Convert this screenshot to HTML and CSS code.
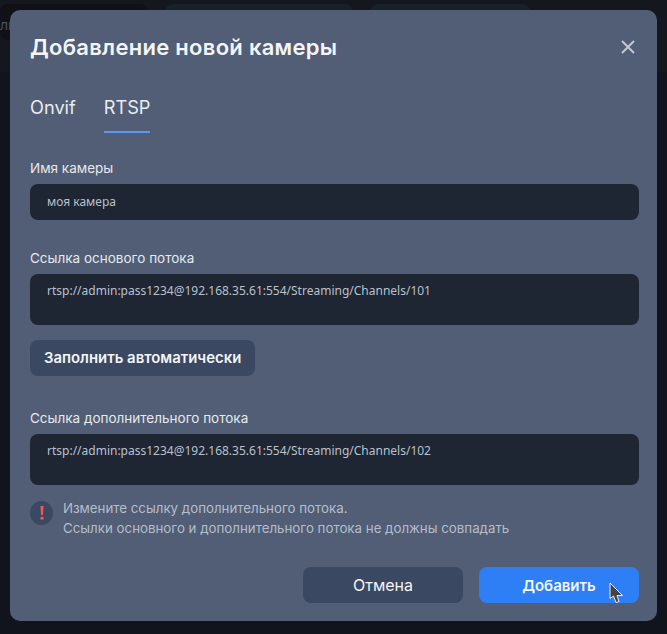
FILE: index.html
```html
<!DOCTYPE html>
<html lang="ru">
  <head>
    <meta charset="UTF-8" />
    <title>Добавление новой камеры</title>
    <link rel="stylesheet" href="styles.css">
  </head>
  <body>
    <div class="page-behind">
      <div class="behind-tabs">
        <div class="behind-tab behind-tab-first">ли</div>
        <div class="behind-tab behind-tab-second"></div>
        <div class="behind-tab behind-tab-third"></div>
      </div>
    </div>

    <div class="modal">
      <div class="modal-header">
        <h1 class="modal-title">Добавление новой камеры</h1>
        <svg class="modal-close" width="16" height="16" viewBox="0 0 16 16" fill="none" stroke="currentColor" stroke-width="2">
          <path d="M2 2l12 12M14 2L2 14"/>
        </svg>
      </div>

      <div class="tabs">
        <div class="tab">Onvif</div>
        <div class="tab tab-active">RTSP</div>
      </div>

      <div class="field field-name">
        <div class="field-label">Имя камеры</div>
        <div class="input">моя камера</div>
      </div>

      <div class="field field-main">
        <div class="field-label">Ссылка основого потока</div>
        <div class="input input-area">rtsp://admin:pass1234@192.168.35.61:554/Streaming/Channels/101</div>
      </div>

      <button class="btn btn-fill">Заполнить автоматически</button>

      <div class="field field-extra">
        <div class="field-label">Ссылка дополнительного потока</div>
        <div class="input input-area">rtsp://admin:pass1234@192.168.35.61:554/Streaming/Channels/102</div>
      </div>

      <div class="warning">
        <div class="warning-icon">
          <svg width="4" height="14" viewBox="0 0 4 14" fill="currentColor">
            <path d="M0.4 0h3.2L2.9 9H1.1z"/>
            <circle cx="2" cy="12.2" r="1.6"/>
          </svg>
        </div>
        <div class="warning-text">
          <div>Измените ссылку дополнительного потока.</div>
          <div>Ссылки основного и дополнительного потока не должны совпадать</div>
        </div>
      </div>

      <div class="modal-footer">
        <button class="btn btn-cancel">Отмена</button>
        <button class="btn btn-submit">Добавить</button>
      </div>

      <svg class="cursor" width="15" height="23" viewBox="0 0 15 23">
        <path d="M1 1v15.5l3.5-2.5 2.5 6.5 3-1-2-6h5.5z" fill="#444" stroke="#eee" stroke-width="1"/>
      </svg>
    </div>
  </body>
</html>
```

FILE: styles.css
```css
:root {
  --modal: #515e75;
  --field: #1e2533;
  --btn: #3b4861;
  --primary: #2e7ff6;
  --text: #f3f5f8;
  --muted: #b5bdca;
}

html,
body {
  margin: 0;
  padding: 0;
  height: 100%;
  background-color: #11141c;
  font-family: Inter, "Noto Sans", sans-serif;
  color: var(--text);
  overflow: hidden;
}

.page-behind {
  height: 72px;
  background-color: #14171e;
}

.behind-tabs {
  display: flex;
  gap: 17px;
  padding-top: 4px;
}

.behind-tab {
  height: 36px;
  border-radius: 8px;
  background-color: #182029;
  font-size: 14px;
  color: #4a505c;
  line-height: 42px;
}

.behind-tab-first {
  width: 148px;
  background-color: #0f1116;
}

.behind-tab-second {
  width: 188px;
}

.behind-tab-third {
  width: 160px;
}

.modal {
  position: absolute;
  top: 10px;
  left: 10px;
  width: 609px;
  height: 571px;
  padding: 20px 18px 20px 20px;
  border-radius: 10px;
  background-color: var(--modal);
}

.modal-header {
  display: flex;
  justify-content: space-between;
  align-items: center;
  height: 34px;
}

.modal-title {
  margin: 0;
  font-size: 22px;
  font-weight: 600;
  letter-spacing: 0.28px;
}

.modal-close {
  color: #c3c9d4;
  margin-right: 3px;
}

.tabs {
  display: flex;
  gap: 28px;
  margin-top: 21px;
}

.tab {
  height: 48px;
  font-size: 18.2px;
  line-height: 44px;
  color: #e9ecf1;
}

.tab-active {
  border-bottom: 2px solid #5c97f5;
  box-sizing: border-box;
}

.field-name {
  margin-top: 25px;
}

.field-main {
  margin-top: 28px;
}

.field-extra {
  margin-top: 32px;
}

.field-label {
  font-size: 13.5px;
  line-height: 20px;
  color: #e6e9ee;
  margin-bottom: 6px;
}

.input {
  box-sizing: border-box;
  height: 36px;
  padding: 0 17px;
  border-radius: 8px;
  background-color: var(--field);
  font-family: "Noto Sans", sans-serif;
  font-size: 12px;
  line-height: 36px;
  color: #b9c1cd;
}

.input-area {
  height: 51px;
  line-height: 17px;
  padding-top: 8px;
}

.btn {
  border: 0;
  border-radius: 8px;
  font-family: inherit;
  color: var(--text);
  height: 36px;
}

.btn-fill {
  display: block;
  margin-top: 15px;
  padding: 0 14px;
  background-color: var(--btn);
  font-size: 14.9px;
  font-weight: 600;
}

.warning {
  display: flex;
  gap: 10px;
  margin-top: 13px;
}

.warning-icon {
  display: flex;
  align-items: center;
  justify-content: center;
  width: 23px;
  height: 24px;
  margin-top: 3px;
  border-radius: 50%;
  background-color: var(--btn);
  color: #ee5a5a;
}

.warning-text {
  font-size: 13.3px;
  line-height: 20px;
  color: var(--muted);
}

.modal-footer {
  display: flex;
  justify-content: flex-end;
  gap: 16px;
  margin-top: 29px;
}

.btn-cancel,
.btn-submit {
  width: 160px;
  font-size: 16px;
}

.btn-cancel {
  background-color: var(--btn);
}

.btn-submit {
  background-color: var(--primary);
  font-weight: 600;
  font-size: 15px;
}

.cursor {
  position: absolute;
  left: 599px;
  top: 572px;
}
```
